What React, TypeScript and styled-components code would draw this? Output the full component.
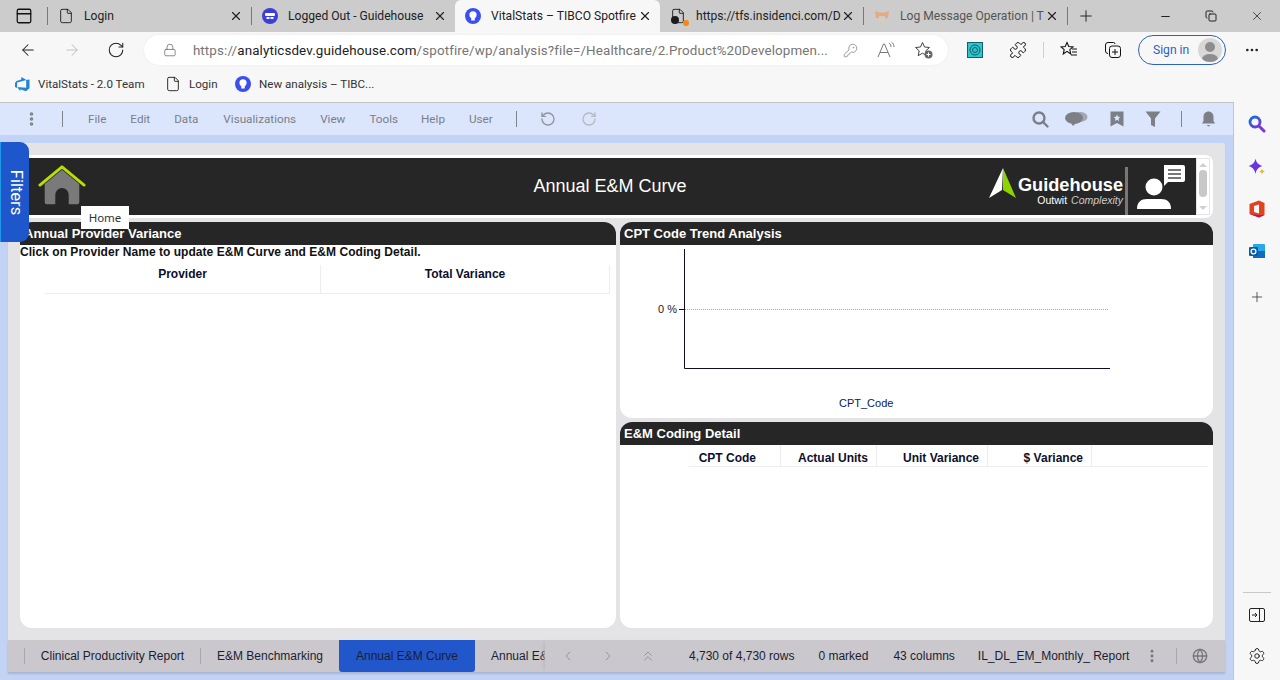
import React from "react";
import styled, { createGlobalStyle } from "styled-components";
import {
  ArrowLeft,
  ArrowRight,
  ChevronLeft,
  ChevronRight,
  ChevronsUp,
  Copy,
  EllipsisVertical,
  File,
  Globe,
  KeyRound,
  Lock,
  Minus,
  MoreHorizontal,
  PanelTop,
  Plus,
  Puzzle,
  RotateCcw,
  RotateCw,
  Settings,
  X,
} from "lucide-react";

const GlobalStyle = createGlobalStyle`
  html, body { margin: 0; padding: 0; height: 680px; overflow: hidden; background: #f7f7f7; }
  * { box-sizing: border-box; }
`;

const Page = styled.div`
  width: 1280px;
  height: 680px;
  display: flex;
  flex-direction: column;
  font-family: Roboto, "Noto Sans", sans-serif;
  color: #222;
`;

const TabStrip = styled.div`
  height: 32px;
  display: flex;
  align-items: center;
  background: #cccccc;
`;

const WindowButton = styled.div`
  width: 47px;
  height: 32px;
  display: flex;
  align-items: center;
  justify-content: center;
`;

const Tab = styled.div<{ $active?: boolean; $width: number; $dim?: boolean }>`
  width: ${(p) => p.$width}px;
  height: 32px;
  display: flex;
  align-items: center;
  gap: 10px;
  padding: 0 8px 0 10px;
  font-size: 12.1px;
  white-space: nowrap;
  position: relative;
  background: ${(p) => (p.$active ? "#f7f7f7" : "transparent")};
  border-radius: ${(p) => (p.$active ? "6px 6px 0 0" : "0")};
  color: ${(p) => (p.$dim ? "#555" : "#222")};
`;

const TabDivider = styled.span`
  width: 1px;
  height: 18px;
  background: #777;
  flex: none;
`;

const TabTitle = styled.span`
  flex: 1;
  min-width: 0;
  margin-right: -7px;
  white-space: nowrap;
`;

const BlackBadge = styled.span`
  position: absolute;
  left: 11px;
  top: 16px;
  width: 8px;
  height: 8px;
  border-radius: 50%;
  background: #1c1c1c;
`;

const OrangeDot = styled.span`
  position: absolute;
  left: 23px;
  top: 20px;
  width: 6px;
  height: 6px;
  border-radius: 50%;
  background: #f7890c;
`;

const WindowControls = styled.div`
  margin-left: auto;
  display: flex;
  align-items: center;
  gap: 33px;
  padding-right: 16px;
`;

const AddressRow = styled.div`
  height: 36px;
  display: flex;
  align-items: center;
  background: #f7f7f7;
`;

const NavButtons = styled.div`
  width: 144px;
  padding-left: 19px;
  display: flex;
  gap: 26px;
  align-items: center;
`;

const Omnibox = styled.div`
  width: 804px;
  height: 30px;
  background: #fff;
  border-radius: 15px;
  display: flex;
  align-items: center;
  padding: 0 14px 0 19px;
  font-size: 13.4px;
  color: #757575;
  box-shadow: 0 0 2px #e4e4e4;
`;

const UrlText = styled.span`
  margin-left: 16px;
  width: 644px;
  white-space: nowrap;
  letter-spacing: 0.12px;
`;

const UrlHost = styled.span`
  color: #222;
`;

const OmniIcons = styled.div`
  margin-left: 12px;
  display: flex;
  align-items: center;
  gap: 18px;
`;

const BrowserActions = styled.div`
  flex: 1;
  display: flex;
  align-items: center;
  padding-left: 19px;
  gap: 26px;
`;

const ExtensionTile = styled.div`
  width: 16px;
  height: 16px;
  background: #2fc5cf;
  border: 1px solid #13606a;
  display: flex;
  align-items: center;
  justify-content: center;
`;

const ActionDivider = styled.span`
  width: 1px;
  height: 16px;
  background: #d0d0d0;
  margin: 0 -10px;
`;

const SignIn = styled.div`
  width: 88px;
  height: 30px;
  border: 1px solid #2a62bf;
  border-radius: 15px;
  display: flex;
  align-items: center;
  justify-content: space-between;
  padding: 0 3px 0 14px;
  font-size: 12.1px;
  color: #2a62bf;
  margin-left: -10px;
`;

const MoreSlot = styled.div`
  display: flex;
  margin-left: -8px;
`;

const Avatar = styled.div`
  width: 24px;
  height: 24px;
  border-radius: 50%;
  background: #d8d8d8;
  overflow: hidden;
`;

const BookmarkBar = styled.div`
  height: 34px;
  display: flex;
  align-items: center;
  padding: 0 0 2px 14px;
  background: #f7f7f7;
  font-size: 11.6px;
  color: #333;
`;

const Bookmark = styled.div<{ $gap: number; $width: number }>`
  width: ${(p) => p.$width}px;
  display: flex;
  align-items: center;
  gap: ${(p) => p.$gap}px;
  white-space: nowrap;
`;

const Body = styled.div`
  flex: 1;
  min-height: 0;
  display: flex;
`;

const AppFrame = styled.div`
  width: 1234px;
  display: flex;
  flex-direction: column;
  position: relative;
  background: #c2d3f6;
  border-top: 1px solid #c4c4c4;
  border-right: 1px solid #c4c4c4;
`;

const MenuBar = styled.div`
  height: 32px;
  flex: none;
  display: flex;
  align-items: center;
  background: #dbe6fd;
  font-family: Roboto, "Liberation Sans", sans-serif;
  font-size: 11.7px;
  color: #7a7f88;
`;

const MenuHandle = styled.div`
  width: 63px;
  display: flex;
  align-items: center;
  padding-left: 23px;
  gap: 22px;
`;

const VerticalRule = styled.span<{ $tall?: number }>`
  display: block;
  width: 1px;
  height: ${(p) => p.$tall ?? 16}px;
  background: #7f858f;
  flex: none;
`;

const MenuItem = styled.span<{ $gap: number }>`
  margin-left: ${(p) => p.$gap}px;
`;

const UndoGroup = styled.div`
  display: flex;
  align-items: center;
  gap: 25px;
  margin-left: 23px;
`;

const UndoRule = styled(VerticalRule)`
  margin-right: -2px;
`;

const MenuRight = styled.div`
  margin-left: auto;
  display: flex;
  align-items: center;
  padding-right: 17px;
`;

const MenuIcon = styled.div<{ $gap?: number }>`
  display: flex;
  margin-left: ${(p) => p.$gap ?? 0}px;
`;

const Workspace = styled.div`
  flex: 1;
  min-height: 0;
  margin: 8px;
  display: flex;
  flex-direction: column;
  background: #e4e4e6;
  border-radius: 3px 3px 0 0;
  box-shadow: 0 1px 1px #a9b7d5;
`;

const Canvas = styled.div`
  flex: 1;
  min-height: 0;
  padding: 12px;
  display: flex;
  flex-direction: column;
  gap: 4px;
`;

const BannerFrame = styled.div`
  height: 63px;
  width: 1193px;
  background: #fff;
  border-radius: 0 8px 8px 0;
  padding: 3px 3px 3px 0;
  display: flex;
`;

const Banner = styled.div`
  flex: 1;
  background: #262626;
  display: flex;
  align-items: center;
  position: relative;
  color: #fff;
`;

const HomeIcon = styled.div`
  width: 66px;
  flex: none;
  padding-left: 18px;
  display: flex;
  margin-top: 6px;
  align-self: flex-start;
`;

const BannerTitle = styled.div`
  flex: 1;
  text-align: center;
  font-family: "Liberation Sans", Arial, sans-serif;
  font-size: 18px;
  padding-left: 145px;
`;

const LogoBlock = styled.div`
  display: flex;
  align-items: center;
  align-self: stretch;
  width: 139px;
  flex: none;
`;

const LogoMark = styled.svg`
  flex: none;
  margin-bottom: 7px;
`;

const LogoWords = styled.div`
  width: 105px;
  flex: none;
  margin-left: 1px;
  display: flex;
  flex-direction: column;
  align-items: flex-end;
  font-family: "Liberation Sans", Arial, sans-serif;
  margin-top: 10px;
`;

const LogoName = styled.span`
  font-size: 18.2px;
  font-weight: 700;
  line-height: 18px;
`;

const LogoTag = styled.span`
  font-size: 10.5px;
  line-height: 13px;
  white-space: nowrap;
`;

const LogoTagItalic = styled.i`
  font-weight: 400;
  color: #ccc;
  margin-left: 4px;
  font-size: 10.5px;
`;

const LogoDivider = styled.span`
  width: 3px;
  height: 48px;
  background: #777;
  flex: none;
  margin: 9px 0 0 auto;
`;

const ContactIcon = styled.div`
  width: 68px;
  flex: none;
  display: flex;
  padding-left: 7px;
`;

const BannerScroll = styled.div`
  width: 14px;
  flex: none;
  align-self: stretch;
  background: #fff;
  border: 1px solid #e4e4e4;
  display: flex;
  flex-direction: column;
  align-items: center;
  justify-content: space-between;
  padding: 4px 0;
`;

const ScrollThumb = styled.div`
  width: 8px;
  height: 27px;
  background: #c8c8c8;
  border-radius: 4px;
  margin-bottom: 7px;
`;

const ScrollArrow = styled.span<{ $down?: boolean }>`
  width: 0;
  height: 0;
  border-left: 4px solid transparent;
  border-right: 4px solid transparent;
  ${(p) => (p.$down ? "border-top: 4px solid #cfcfcf;" : "border-bottom: 4px solid #cfcfcf;")}
`;

const Panels = styled.div`
  flex: 1;
  min-height: 0;
  display: grid;
  grid-template-columns: 596px 593px;
  grid-template-rows: 196px 206px;
  gap: 4px;
`;

const Panel = styled.section<{ $tall?: boolean }>`
  grid-row: ${(p) => (p.$tall ? "1 / 3" : "auto")};
  background: #fff;
  border-radius: 12px;
  overflow: hidden;
  display: flex;
  flex-direction: column;
  font-family: "Liberation Sans", Arial, sans-serif;
`;

const PanelHeader = styled.h2`
  margin: 0;
  height: 23px;
  flex: none;
  background: #262626;
  color: #fff;
  font-size: 13px;
  font-weight: 700;
  line-height: 23px;
  padding-left: 4px;
`;

const Hint = styled.div`
  font-size: 12px;
  font-weight: 700;
  color: #111;
  line-height: 14px;
  letter-spacing: 0.04px;
`;

const TableHead = styled.div<{ $cols: string; $left: number; $right: number; $top?: number }>`
  display: grid;
  grid-template-columns: ${(p) => p.$cols};
  margin: ${(p) => p.$top ?? 0}px ${(p) => p.$right}px 0 ${(p) => p.$left}px;
  border-bottom: 1px solid #ededed;
  font-size: 12px;
  font-weight: 700;
  color: #0b0f2c;
`;

const ProviderCell = styled.div`
  height: 28px;
  padding-top: 2px;
  border-right: 1px solid #ededed;
  line-height: 14px;
  text-align: center;
`;

const DetailCell = styled.div<{ $pad?: number; $plain?: boolean }>`
  height: 21px;
  padding: 6px ${(p) => p.$pad ?? 8}px 0 0;
  border-right: ${(p) => (p.$plain ? "none" : "1px solid #ededed")};
  line-height: 14px;
  text-align: right;
`;

const Chart = styled.div`
  flex: 1;
  position: relative;
`;

const ChartSvg = styled.svg`
  display: block;
`;

const Footer = styled.div`
  height: 32px;
  flex: none;
  display: flex;
  align-items: center;
  background: #cac8cc;
  font-family: "Liberation Sans", Arial, sans-serif;
  font-size: 12px;
  color: #1b1d33;
  position: relative;
  box-shadow: 0 2px 2px #a9b7d5;
`;

const PageTabs = styled.div`
  width: 537px;
  height: 32px;
  flex: none;
  overflow: hidden;
  display: flex;
  align-items: center;
  padding-left: 16px;
  white-space: nowrap;
`;

const PageRule = styled.span`
  width: 1px;
  height: 16px;
  background: #a8a6aa;
  flex: none;
`;

const PageTab = styled.div<{ $active?: boolean; $width: number }>`
  width: ${(p) => p.$width}px;
  height: 32px;
  flex: none;
  line-height: 32px;
  text-align: center;
  background: ${(p) => (p.$active ? "#2257cc" : "transparent")};
  border-radius: ${(p) => (p.$active ? "0 0 3px 3px" : "0")};
`;

const ClippedPageTab = styled.div`
  flex: none;
  height: 32px;
  line-height: 32px;
  padding-left: 16px;
`;

const PagerGroup = styled.div`
  width: 144px;
  height: 32px;
  flex: none;
  display: flex;
  align-items: center;
  gap: 24px;
  padding-left: 15px;
  box-shadow: -3px 0 3px -2px #b7b5b9;
`;

const StatusGroup = styled.div`
  flex: 1;
  display: flex;
  align-items: center;
  white-space: nowrap;
`;

const StatusText = styled.span<{ $gap: number }>`
  margin-left: ${(p) => p.$gap}px;
`;

const FooterEnd = styled.div`
  margin-left: 15px;
  display: flex;
  align-items: center;
`;

const FooterRule = styled(VerticalRule)`
  margin: 0 15px 0 16px;
  background: #a8a6aa;
`;

const FiltersTab = styled.div`
  position: absolute;
  left: 0;
  top: 39px;
  width: 29px;
  height: 100px;
  padding-left: 3px;
  background: #1e57cc;
  border-radius: 0 9px 9px 0;
  color: #fff;
  font-family: Roboto, "Liberation Sans", sans-serif;
  font-size: 16.5px;
  display: flex;
  align-items: center;
  justify-content: center;
  border-left: 1px solid #1e9be8;
`;

const FiltersLabel = styled.span`
  transform: rotate(90deg);
  white-space: nowrap;
`;

const HomeTooltip = styled.div`
  position: absolute;
  left: 81px;
  top: 103px;
  width: 48px;
  height: 23px;
  background: #fff;
  color: #333;
  font-family: "Noto Sans", sans-serif;
  font-size: 11.5px;
  line-height: 23px;
  text-align: center;
`;

const SideBar = styled.aside`
  flex: 1;
  display: flex;
  flex-direction: column;
  align-items: center;
  padding: 12px 0 14px;
  background: #f7f7f7;
`;

const SideIcon = styled.div<{ $gap: number }>`
  margin-bottom: ${(p) => p.$gap}px;
  height: 20px;
  display: flex;
  align-items: center;
`;

const SideSpacer = styled.div`
  flex: 1;
`;

const SideRule = styled.div`
  width: 28px;
  height: 1px;
  background: #c8c8c8;
  margin-bottom: 12px;
`;

// spotfire bulb favicon
const BulbIcon = ({ size = 16 }: { size?: number }) => (
  <svg width={size} height={size} viewBox="0 0 16 16" style={{ flex: "none" }}>
    <circle cx="8" cy="8" r="8" fill="#3b4ff0" />
    <circle cx="8" cy="6.8" r="3.6" fill="#fff" />
    <rect x="6.2" y="10" width="3.6" height="2.6" rx="0.6" fill="#fff" />
  </svg>
);

const GuidehouseFavicon = () => (
  <svg width="16" height="16" viewBox="0 0 16 16" style={{ flex: "none" }}>
    <circle cx="8" cy="8" r="8" fill="#3b3fd8" />
    <rect x="3" y="5" width="10" height="3" rx="1" fill="#fff" />
    <rect x="4.5" y="9" width="3" height="2" fill="#fff" />
    <rect x="8.5" y="9" width="3" height="2" fill="#fff" />
  </svg>
);

const LogFavicon = () => (
  <svg width="16" height="16" viewBox="0 0 16 16" style={{ flex: "none" }}>
    <path d="M1 3l4 1.5h6L15 3l-1 7h-3V8H5v2H2z" fill="#e5ab7e" />
    <path d="M5 11h6v3H5z" fill="#edc7a6" />
  </svg>
);

const VitalFavicon = () => (
  <svg width="16" height="16" viewBox="0 0 16 16" style={{ flex: "none" }}>
    <path
      d="M15.5 3.4v8.800l-3.600 3-5.600-2v2l-3.200-4.100 9.100.7V4.100zM12.500 4L7.300 1v2.600L2.500 5 1 7v4l2.100.9V6.600z"
      fill="#1f83d6"
    />
  </svg>
);

const HomeSvg = () => (
  <svg width="50" height="44" viewBox="0 0 50 44">
    <path d="M7 20L25 5l18 15v19a2 2 0 0 1-2 2H32V31a7 7 0 0 0-14 0v10H9a2 2 0 0 1-2-2z" fill="#7a7a7a" />
    <path
      d="M2 21L25 2l23 19"
      fill="none"
      stroke="#b7e000"
      strokeWidth="3"
      strokeLinecap="round"
      strokeLinejoin="round"
    />
  </svg>
);

const ContactSvg = () => (
  <svg width="50" height="46" viewBox="0 0 50 46">
    <circle cx="19" cy="23" r="8.5" fill="#fff" />
    <path d="M2 45c0-7 4-10 10-10h14c6 0 10 3 10 10z" fill="#fff" />
    <path d="M29 1h19a2 2 0 0 1 2 2v13a2 2 0 0 1-2 2H33l-4 4z" fill="#fff" />
    <path d="M33 5h13v2H33zM33 9h13v2H33zM33 13h13v2H33z" fill="#777" />
  </svg>
);

const Grey = "#7c7f86";

const SearchGlyph = () => (
  <svg width="17" height="17" viewBox="0 0 17 17">
    <circle cx="7" cy="7" r="5.5" fill="none" stroke={Grey} strokeWidth="2.4" />
    <path d="M11 11l4.500 4.500" stroke={Grey} strokeWidth="2.4" strokeLinecap="round" />
  </svg>
);

const CommentGlyph = () => (
  <svg width="24" height="16" viewBox="0 0 24 16">
    <ellipse cx="16" cy="6" rx="7.5" ry="5" fill="#a3a7ae" />
    <ellipse cx="10" cy="7" rx="9" ry="6" fill={Grey} />
    <path d="M7 12l2 3 3-3z" fill={Grey} />
  </svg>
);

const BookmarkGlyph = () => (
  <svg width="14" height="16" viewBox="0 0 14 16">
    <path d="M0.5 0.5h13v15L7 12l-6.500 3.500z" fill={Grey} />
    <path d="M7 3.500l1 2.300 2.400.2-1.800 1.600.5 2.400L7 8.800l-2.100 1.200.5-2.400L3.600 6 6 5.800z" fill="#dbe6fd" />
  </svg>
);

const FunnelGlyph = () => (
  <svg width="16" height="16" viewBox="0 0 16 16">
    <path d="M0.5 0.5h15L10 7.500V16l-4-2V7.500z" fill={Grey} />
  </svg>
);

const BellGlyph = () => (
  <svg width="15" height="16" viewBox="0 0 14 16">
    <path d="M7 0.5c3 0 5 2.300 5 5.500v4l1.500 2.500H.5L2 10V6c0-3.200 2-5.500 5-5.500z" fill={Grey} />
    <path d="M5 14h4l-2 1.500z" fill={Grey} />
  </svg>
);

const SideSearch = () => (
  <svg width="18" height="18" viewBox="0 0 18 18">
    <defs>
      <linearGradient id="sideSearch" x1="0" y1="0" x2="1" y2="1">
        <stop offset="0" stopColor="#1170e0" />
        <stop offset="1" stopColor="#7b35d8" />
      </linearGradient>
    </defs>
    <circle cx="7" cy="7" r="5" fill="none" stroke="url(#sideSearch)" strokeWidth="2.8" />
    <path d="M11 11l5 5" stroke="#7b35d8" strokeWidth="3" strokeLinecap="round" />
  </svg>
);

const SideSpark = () => (
  <svg width="18" height="18" viewBox="0 0 18 18">
    <path d="M7.5 0.500c.8 4 2.500 6 7 7.500-4.500 1.500-6.200 3.500-7 8-.8-4.500-2.500-6.500-7-8 4.500-1.500 6.200-3.500 7-7.500z" fill="#6a35e0" />
    <path d="M14 10.500c.3 1.700 1 2.400 3 3-2 .6-2.700 1.300-3 3-.3-1.700-1-2.400-3-3 2-.6 2.700-1.300 3-3z" fill="#f3b51c" />
  </svg>
);

const SideOffice = () => (
  <svg width="16" height="18" viewBox="0 0 16 18">
    <path d="M10 0.500L15.500 3v12L10 17.500 0.500 14V4z" fill="#e1431e" />
    <path d="M10 4.500L5 6v6l5 1.500z" fill="#f7f7f7" />
    <path d="M0.500 14l9.500 3.500 5.500-2.500H8z" fill="#b4107c" />
  </svg>
);

const SideOutlook = () => (
  <svg width="18" height="18" viewBox="0 0 18 18">
    <rect x="5" y="2" width="12" height="14" rx="1" fill="#28a8ea" />
    <rect x="5" y="9" width="12" height="7" fill="#0f6cbd" />
    <rect x="1" y="5" width="9" height="9" rx="1" fill="#0a5cab" />
    <circle cx="5.5" cy="9.5" r="2.4" fill="none" stroke="#fff" strokeWidth="1.3" />
  </svg>
);

const SidePanelToggle = () => (
  <svg width="16" height="16" viewBox="0 0 16 16">
    <rect x="0.5" y="1.500" width="15" height="13" rx="1.500" fill="none" stroke="#222" />
    <path d="M10.5 1.500v13" stroke="#222" />
    <path d="M3 8h5M6 6l2 2-2 2" fill="none" stroke="#222" />
  </svg>
);

const ReadAloud = () => (
  <svg width="20" height="18" viewBox="0 0 20 18">
    <path d="M2 16L7.500 3h1L14 16M4 11.500h8" fill="none" stroke="#777" />
    <path d="M13 2c1.500 1 2 2.500 2 4M15.500 1c1.700 1.200 2.500 3 2.500 5" fill="none" stroke="#777" />
  </svg>
);

const FavoriteAdd = () => (
  <svg width="20" height="18" viewBox="0 0 20 18">
    <path d="M8.500 1.500l2 4.500 5 .5-3.700 3.300 1 4.900-4.300-2.500-4.300 2.500 1-4.900L1.500 6.500l5-.5z" fill="none" stroke="#444" />
    <circle cx="14.5" cy="13.5" r="4" fill="#666" />
    <path d="M14.5 11.500v4M12.500 13.500h4" stroke="#fff" />
  </svg>
);

const Favorites = () => (
  <svg width="18" height="18" viewBox="0 0 18 18">
    <path d="M7 1.500l1.800 4 4.200.4-3.200 2.800.9 4.300L7 10.400l-3.700 2.600.9-4.300L1 5.900l4.200-.4z" fill="none" stroke="#111" strokeWidth="1.100" />
    <path d="M12 8h5M12 11h5M11 14h6" stroke="#111" />
  </svg>
);

const Collections = () => (
  <svg width="18" height="18" viewBox="0 0 18 18">
    <path d="M4 12.500A2.500 2.500 0 0 1 1.500 10V4A2.500 2.500 0 0 1 4 1.500h5.500A1.500 1.500 0 0 1 11 3" fill="none" stroke="#111" />
    <rect x="5.5" y="5" width="11" height="11.500" rx="2.500" fill="none" stroke="#111" />
    <path d="M11 8v6M8 11h6" stroke="#111" />
  </svg>
);

const App = () => {
  const menu: [string, number][] = [
    ["File", 25],
    ["Edit", 24],
    ["Data", 24],
    ["Visualizations", 25],
    ["View", 24],
    ["Tools", 24],
    ["Help", 23],
    ["User", 24],
  ];

  return (
    <Page>
      <GlobalStyle />
      <TabStrip>
        <WindowButton>
          <PanelTop size={18} color="#111" strokeWidth={1.7} />
        </WindowButton>
        <TabDivider />
        <Tab $width={203}>
          <File size={16} color="#111" strokeWidth={1.3} />
          <TabTitle>Login</TabTitle>
          <X size={14} color="#222" />
        </Tab>
        <TabDivider />
        <Tab $width={203}>
          <GuidehouseFavicon />
          <TabTitle>Logged Out - Guidehouse</TabTitle>
          <X size={14} color="#222" />
        </Tab>
        <Tab $width={205} $active>
          <BulbIcon />
          <TabTitle>VitalStats – TIBCO Spotfire</TabTitle>
          <X size={14} color="#222" />
        </Tab>
        <Tab $width={203}>
          <File size={16} color="#111" strokeWidth={1.3} />
          <BlackBadge />
          <OrangeDot />
          <TabTitle>https://tfs.insidenci.com/D</TabTitle>
          <X size={14} color="#222" />
        </Tab>
        <TabDivider />
        <Tab $width={203} $dim>
          <LogFavicon />
          <TabTitle>Log Message Operation | T</TabTitle>
          <X size={14} color="#222" />
        </Tab>
        <TabDivider />
        <Plus size={18} color="#222" strokeWidth={1.3} style={{ marginLeft: 9 }} />
        <WindowControls>
          <Minus size={13} color="#222" />
          <Copy size={12} color="#222" />
          <X size={14} color="#222" strokeWidth={1.3} />
        </WindowControls>
      </TabStrip>

      <AddressRow>
        <NavButtons>
          <ArrowLeft size={18} color="#222" strokeWidth={1.4} />
          <ArrowRight size={18} color="#c4c4c4" strokeWidth={1.4} />
          <RotateCw size={18} color="#222" strokeWidth={1.4} />
        </NavButtons>
        <Omnibox>
          <Lock size={14} color="#666" strokeWidth={1.3} />
          <UrlText>
            https://<UrlHost>analyticsdev.guidehouse.com</UrlHost>
            /spotfire/wp/analysis?file=/Healthcare/2.Product%20Developmen...
          </UrlText>
          <OmniIcons>
            <KeyRound size={15} color="#888" strokeWidth={1.3} />
            <ReadAloud />
            <FavoriteAdd />
          </OmniIcons>
        </Omnibox>
        <BrowserActions>
          <ExtensionTile>
            <svg width="12" height="12" viewBox="0 0 12 12">
              <circle cx="6" cy="6" r="5" fill="none" stroke="#0f5f69" />
              <circle cx="6" cy="6" r="2.5" fill="none" stroke="#0f5f69" />
            </svg>
          </ExtensionTile>
          <Puzzle size={18} color="#111" strokeWidth={1.3} />
          <ActionDivider />
          <Favorites />
          <Collections />
          <SignIn>
            Sign in
            <Avatar>
              <svg width="24" height="24" viewBox="0 0 24 24">
                <circle cx="12" cy="9" r="5" fill="#8d8d8d" />
                <ellipse cx="12" cy="21" rx="8" ry="5" fill="#8d8d8d" />
              </svg>
            </Avatar>
          </SignIn>
          <MoreSlot>
            <MoreHorizontal size={16} color="#222" />
          </MoreSlot>
        </BrowserActions>
      </AddressRow>

      <BookmarkBar>
        <Bookmark $width={151} $gap={8}>
          <VitalFavicon />
          VitalStats - 2.0 Team
        </Bookmark>
        <Bookmark $width={70} $gap={8}>
          <File size={16} color="#111" strokeWidth={1.3} />
          Login
        </Bookmark>
        <Bookmark $width={150} $gap={8}>
          <BulbIcon />
          New analysis – TIBC...
        </Bookmark>
      </BookmarkBar>

      <Body>
        <AppFrame>
          <MenuBar>
            <MenuHandle>
              <EllipsisVertical size={18} color={Grey} strokeWidth={3} />
              <VerticalRule />
            </MenuHandle>
            {menu.map(([label, gap]) => (
              <MenuItem key={label} $gap={gap}>
                {label}
              </MenuItem>
            ))}
            <UndoGroup>
              <UndoRule />
              <RotateCcw size={16} color="#8f949c" />
              <RotateCw size={16} color="#b5b9c0" />
            </UndoGroup>
            <MenuRight>
              <MenuIcon>
                <SearchGlyph />
              </MenuIcon>
              <MenuIcon $gap={15}>
                <CommentGlyph />
              </MenuIcon>
              <MenuIcon $gap={22}>
                <BookmarkGlyph />
              </MenuIcon>
              <MenuIcon $gap={21}>
                <FunnelGlyph />
              </MenuIcon>
              <MenuIcon $gap={20}>
                <VerticalRule />
              </MenuIcon>
              <MenuIcon $gap={19}>
                <BellGlyph />
              </MenuIcon>
            </MenuRight>
          </MenuBar>

          <Workspace>
            <Canvas>
              <BannerFrame>
                <Banner>
                  <HomeIcon>
                    <HomeSvg />
                  </HomeIcon>
                  <BannerTitle>Annual E&amp;M Curve</BannerTitle>
                  <LogoBlock>
                    <LogoMark width="28" height="30" viewBox="0 0 28 30">
                      <path d="M14 0L0 30l13-8z" fill="#fff" />
                      <path d="M14 0l13 30-13-8z" fill="#8fd400" />
                    </LogoMark>
                    <LogoWords>
                      <LogoName>Guidehouse</LogoName>
                      <LogoTag>
                        Outwit<LogoTagItalic>Complexity</LogoTagItalic>
                      </LogoTag>
                    </LogoWords>
                    <LogoDivider />
                  </LogoBlock>
                  <ContactIcon>
                    <ContactSvg />
                  </ContactIcon>
                  <BannerScroll>
                    <ScrollArrow />
                    <ScrollThumb />
                    <ScrollArrow $down />
                  </BannerScroll>
                </Banner>
              </BannerFrame>

              <Panels>
                <Panel $tall>
                  <PanelHeader>Annual Provider Variance</PanelHeader>
                  <Hint>Click on Provider Name to update E&amp;M Curve and E&amp;M Coding Detail.</Hint>
                  <TableHead $cols="276px 289px" $left={25} $right={6} $top={6}>
                    <ProviderCell>Provider</ProviderCell>
                    <ProviderCell>Total Variance</ProviderCell>
                  </TableHead>
                </Panel>

                <Panel>
                  <PanelHeader>CPT Code Trend Analysis</PanelHeader>
                  <Chart>
                    <ChartSvg width="593" height="173" viewBox="0 0 593 173">
                      <path d="M65 64.5h423" stroke="#aaa" strokeDasharray="1 1" />
                      <path d="M59 64.5h6" stroke="#0c0c30" />
                      <path d="M64.5 4v119.500H490" fill="none" stroke="#0c0c30" />
                      <text x="38" y="68" fontSize="11" fill="#222">
                        0 %
                      </text>
                      <text x="219" y="162" fontSize="11" fill="#0b1a55">
                        CPT_Code
                      </text>
                    </ChartSvg>
                  </Chart>
                </Panel>

                <Panel>
                  <PanelHeader>E&amp;M Coding Detail</PanelHeader>
                  <TableHead $cols="92px 96px 111px 104px 1fr" $left={69} $right={5}>
                    <DetailCell $pad={24}>CPT Code</DetailCell>
                    <DetailCell>Actual Units</DetailCell>
                    <DetailCell>Unit Variance</DetailCell>
                    <DetailCell>$ Variance</DetailCell>
                    <DetailCell $plain />
                  </TableHead>
                </Panel>
              </Panels>
            </Canvas>

            <Footer>
              <PageTabs>
                <PageRule />
                <PageTab $width={175}>Clinical Productivity Report</PageTab>
                <PageRule />
                <PageTab $width={138}>E&amp;M Benchmarking</PageTab>
                <PageTab $width={136} $active>
                  Annual E&amp;M Curve
                </PageTab>
                <ClippedPageTab>Annual E&amp;M Benchmarking</ClippedPageTab>
              </PageTabs>
              <PagerGroup>
                <ChevronLeft size={16} color="#8d8b90" strokeWidth={1.3} />
                <ChevronRight size={16} color="#8d8b90" strokeWidth={1.3} />
                <ChevronsUp size={16} color="#8d8b90" strokeWidth={1.3} />
              </PagerGroup>
              <StatusGroup>
                <StatusText $gap={0}>4,730 of 4,730 rows</StatusText>
                <StatusText $gap={24}>0 marked</StatusText>
                <StatusText $gap={25}>43 columns</StatusText>
                <StatusText $gap={23}>IL_DL_EM_Monthly_ Report</StatusText>
                <FooterEnd>
                  <EllipsisVertical size={16} color="#77757a" strokeWidth={2.4} />
                  <FooterRule />
                  <Globe size={16} color="#77757a" />
                </FooterEnd>
              </StatusGroup>
            </Footer>
          </Workspace>

          <FiltersTab>
            <FiltersLabel>Filters</FiltersLabel>
          </FiltersTab>
          <HomeTooltip>Home</HomeTooltip>
        </AppFrame>

        <SideBar>
          <SideIcon $gap={23}>
            <SideSearch />
          </SideIcon>
          <SideIcon $gap={22}>
            <SideSpark />
          </SideIcon>
          <SideIcon $gap={22}>
            <SideOffice />
          </SideIcon>
          <SideIcon $gap={28}>
            <SideOutlook />
          </SideIcon>
          <Plus size={16} color="#444" strokeWidth={1.3} />
          <SideSpacer />
          <SideRule />
          <SideIcon $gap={21}>
            <SidePanelToggle />
          </SideIcon>
          <SideIcon $gap={0}>
            <Settings size={18} color="#222" strokeWidth={1.3} />
          </SideIcon>
        </SideBar>
      </Body>
    </Page>
  );
};

export default App;
